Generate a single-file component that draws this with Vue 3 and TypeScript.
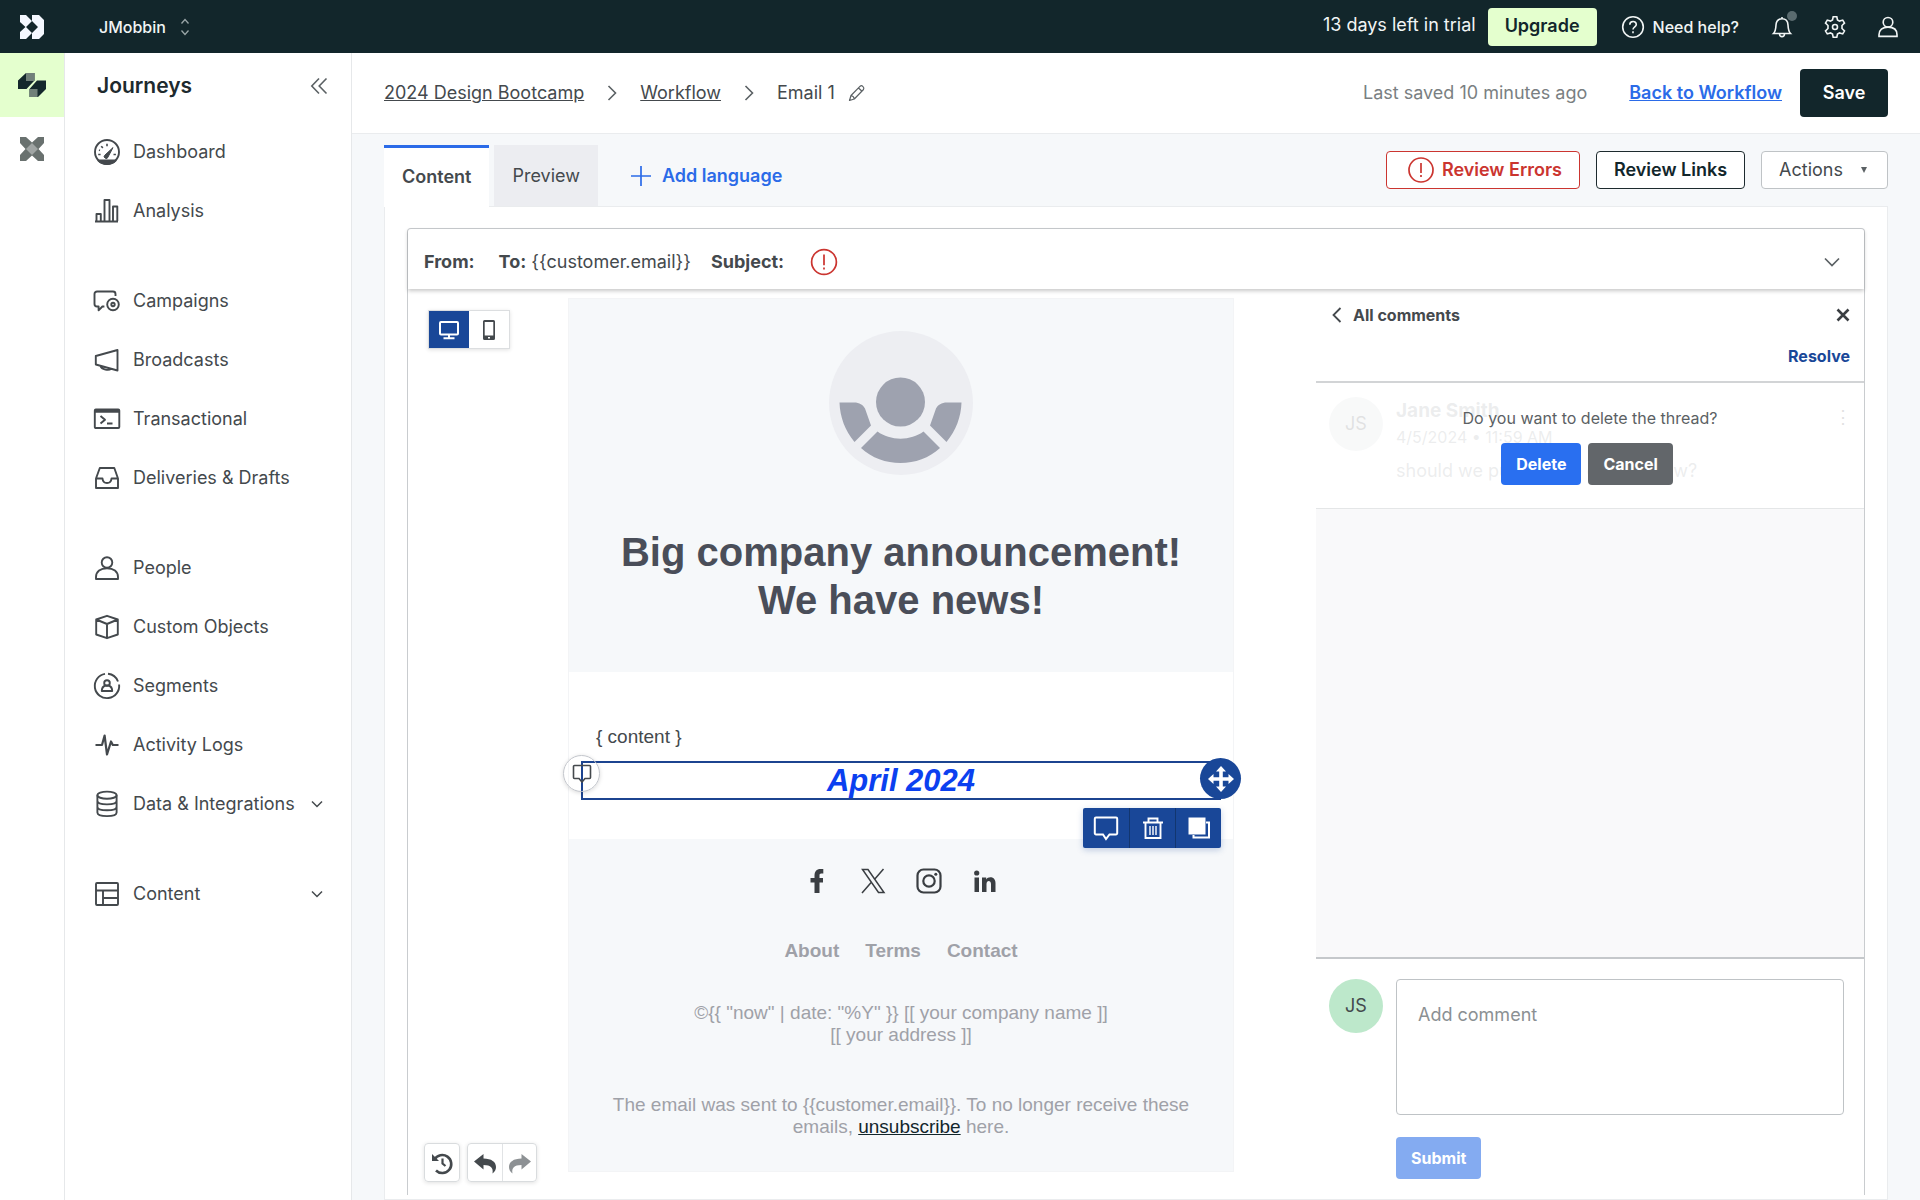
<script setup lang="ts">
import { ref } from 'vue'

interface NavItem {
  label: string
  icon: string
  expandable?: boolean
}

const navGroups: NavItem[][] = [
  [
    {
      label: 'Dashboard',
      icon: '<circle cx="14" cy="14" r="12"/><path d="M5.5 22.5h17A12 12 0 0 1 5.5 22.5z" fill="currentColor"/><path d="M11.8 17.2 20 9.6l-5 9.4a1.9 1.9 0 1 1-3.2-1.8z" fill="currentColor" stroke-width="1"/><path d="M14 5.800v2.400M8.200 8.200l1.700 1.700M5.200 16.500h2.400M20.500 16.500h2.400M6 12l1 .400" stroke-width="1.600"/>',
    },
    {
      label: 'Analysis',
      icon: '<path d="M2 24.500h23M3.500 24V17h4.300v7M11.500 24V3h5v21M20 24V9.500h4.300V24"/>',
    },
  ],
  [
    {
      label: 'Campaigns',
      icon: '<path d="M22.500 9V7A2.500 2.500 0 0 0 20 4.500H4A2.500 2.500 0 0 0 1.500 7v10A2.500 2.500 0 0 0 4 19.500h1.600v3.800l3.800-3.800h2"/><circle cx="20" cy="17.500" r="5.800"/><circle cx="20" cy="17.500" r="1.700"/>',
    },
    {
      label: 'Broadcasts',
      icon: '<path d="M2.800 10 24.500 4v20.500L2.800 18.500zM7.500 20c1 3.800 8.500 4.800 10.500 2.800"/>',
    },
    {
      label: 'Transactional',
      icon: '<rect x="1.800" y="4.500" width="24.500" height="18.500" rx="1"/><path d="M2 6h24" stroke-width="3.500"/><path d="m7.500 11 4.500 3.800-4.500 3.800M14 18.500h5.500"/>',
    },
    {
      label: 'Deliveries & Drafts',
      icon: '<path d="M3 14.500 6.800 4h14.500L25 14.500V24H3zM3 14.500h6.500c.500 6 8.500 6 9 0H25"/>',
    },
  ],
  [
    {
      label: 'People',
      icon: '<circle cx="14" cy="8.500" r="5.300"/><path d="M3 25v-2c0-5.500 4.500-8.800 11-8.800S25 17.500 25 23v2z"/>',
    },
    {
      label: 'Custom Objects',
      icon: '<path d="M14 2.800 24.800 6.500v15L14 25.200 3.200 21.500v-15zM3.200 6.500 14 11l10.800-4.500M14 11v14"/>',
    },
    {
      label: 'Segments',
      icon: '<path d="M15 1.800A12.200 12.200 0 0 1 25 9.500M26.100 12.500A12.200 12.200 0 1 1 12 1.900"/><circle cx="14" cy="11" r="2.800"/><path d="M8.800 19c0-3 1.500-4.800 3.500-5.500h3.400c2 .700 3.500 2.500 3.500 5.500z"/>',
    },
    {
      label: 'Activity Logs',
      icon: '<path d="M2.500 14H9l2.600-9.500L14 23.500l4-13 1.800 3.500h5.700" stroke-width="2.200"/>',
    },
    {
      label: 'Data & Integrations',
      icon: '<ellipse cx="14" cy="5.200" rx="9.600" ry="3.600"/><path d="M4.400 5.200v17.300c0 4.800 19.200 4.800 19.200 0V5.200M4.400 10.800c0 4.800 19.200 4.800 19.200 0M4.400 16.700c0 4.800 19.200 4.800 19.200 0"/>',
      expandable: true,
    },
  ],
  [
    {
      label: 'Content',
      icon: '<rect x="3" y="3" width="22" height="22" rx="1"/><path d="M3 10.500h22M10 10.500V25M10 18h15"/>',
      expandable: true,
    },
  ],
]

const recipient = '{{customer.email}}'
const copyright = '©{{ "now" | date: "%Y" }} [[ your company name ]]'
const address = '[[ your address ]]'
const sentTo = 'The email was sent to {{customer.email}}. To no longer receive these emails,'
const comment = ref('')
</script>

<template>
  <div class="app">
    <header class="topbar">
      <a href="#" class="brand" aria-label="Home">
        <svg width="24" height="24" viewBox="0 0 24 24"><path fill="#f4f8ff" fill-rule="evenodd" d="M0 0h6l6 6 0-6h7l5 5v14l-5 5h-7v-6l-6 6H0v-7l5.500-5L0 7zM12 6l-6 6 6 6 6-6z" /></svg>
      </a>
      <button class="workspace" type="button">
        JMobbin
        <svg width="10" height="18" viewBox="0 0 10 18" fill="none" stroke="#9aa6a8" stroke-width="1.300"><path d="m1.500 5.500 3.500-4 3.500 4M1.500 12.500l3.500 4 3.500-4" /></svg>
      </button>
      <div class="top-right">
        <span class="trial">13 days left in trial</span>
        <button class="upgrade" type="button">Upgrade</button>
        <button class="help" type="button">
          <svg width="24" height="24" viewBox="0 0 24 24" fill="none" stroke="currentColor" stroke-width="1.600"><circle cx="12" cy="12" r="10.300" /><path d="M8.800 9.800c0-4.300 6.500-4.200 6.500-.400 0 2.400-3.300 2.400-3.300 5.200M12 16.200v2" /></svg>
          Need help?
        </button>
        <button class="icon-btn bell" type="button" aria-label="Notifications">
          <svg width="24" height="24" viewBox="0 0 24 24" fill="none" stroke="currentColor" stroke-width="1.600"><path d="M3.500 18.500c2.200-2.200 2.300-5 2.500-8.500.200-4 2.500-6.200 6-6.200s5.800 2.200 6 6.200c.200 3.500.300 6.300 2.500 8.500zM12 3.800V2M9.500 19c.200 3.500 4.800 3.500 5 0" /></svg>
          <span class="bell-dot"></span>
        </button>
        <button class="icon-btn" type="button" aria-label="Settings">
          <svg width="24" height="24" viewBox="0 0 24 24" fill="none" stroke="currentColor" stroke-width="1.600"><path d="M10.200 1.800h3.600l.7 3.200 2 1.100 3.200-1 1.800 3.100-2.500 2.300v3l2.500 2.300-1.800 3.100-3.200-1-2 1.100-.700 3.200h-3.600L9.500 19l-2-1.100-3.200 1-1.800-3.100L5 13.500v-3L2.500 8.200l1.800-3.100 3.200 1 2-1.100z" /><circle cx="12" cy="12" r="2.500" /></svg>
        </button>
        <button class="icon-btn" type="button" aria-label="Account">
          <svg width="24" height="24" viewBox="0 0 28 28" fill="none" stroke="currentColor" stroke-width="1.900"><circle cx="14" cy="8.500" r="5.600" /><path d="M3.500 25v-2c0-5.500 4-8.800 10.500-8.800S24.500 17.500 24.500 23v2z" /></svg>
        </button>
      </div>
    </header>

    <div class="body">
      <nav class="rail" aria-label="Products">
        <a href="#" class="rail-item active" aria-label="Journeys">
          <svg width="28" height="26" viewBox="0 0 28 26"><path fill="#14282c" d="M0 8.500 8 1h8.500v7.500L8.500 17H0zM28 8.500V17l-8 8h-8.500v-8L19 8.500z" /><path fill="#71807a" d="M8 1h8.500v8H8zM11.500 17h8v8h-8z" /></svg>
        </a>
        <a href="#" class="rail-item" aria-label="Data Pipelines">
          <svg width="24" height="24" viewBox="0 0 24 24"><path fill="#69716f" d="M0 0h6l6 5.500L18 0h6v6l-5.500 6 5.500 6v6h-6l-6-5.500L6 24H0v-6l5.500-6L0 6z" /><path fill="#a0a5a4" d="m12 6 6 6-6 6-6-6z" /></svg>
        </a>
      </nav>

      <aside class="sidebar">
        <div class="side-head">
          <h2>Journeys</h2>
          <button type="button" aria-label="Collapse sidebar">
            <svg width="18" height="18" viewBox="0 0 18 18" fill="none" stroke="#5b6164" stroke-width="1.600"><path d="M9 1.500 1.800 9 9 16.500M16.500 1.500 9.200 9l7.300 7.500" /></svg>
          </button>
        </div>
        <ul v-for="(group, g) in navGroups" :key="g" class="nav-group">
          <li v-for="item in group" :key="item.label">
            <a href="#" class="nav-item">
              <svg width="28" height="28" viewBox="0 0 28 28" fill="none" stroke="currentColor" stroke-width="1.900" stroke-linejoin="round" v-html="item.icon" />
              <span>{{ item.label }}</span>
              <svg v-if="item.expandable" class="chev" width="12" height="8" viewBox="0 0 12 8" fill="none" stroke="currentColor" stroke-width="1.500"><path d="m1 1.500 5 5 5-5" /></svg>
            </a>
          </li>
        </ul>
      </aside>

      <main class="main">
        <div class="page-head">
          <nav class="crumbs" aria-label="Breadcrumb">
            <a href="#">2024 Design Bootcamp</a>
            <svg width="10" height="16" viewBox="0 0 10 16" fill="none" stroke="#5b6164" stroke-width="1.600"><path d="m1.500 1 7 7-7 7" /></svg>
            <a href="#">Workflow</a>
            <svg width="10" height="16" viewBox="0 0 10 16" fill="none" stroke="#5b6164" stroke-width="1.600"><path d="m1.500 1 7 7-7 7" /></svg>
            <span>Email 1</span>
            <button type="button" class="pencil" aria-label="Rename">
              <svg width="18" height="18" viewBox="0 0 18 18" fill="none" stroke="#5b6164" stroke-width="1.200" stroke-linejoin="round"><path d="M1.500 16.500 3 11.500 12.200 2.200c1.700-1.400 4.600 1.300 3.300 3.300L6.300 15zM3 11.500c1.700.300 3 1.700 3.300 3.500M10.500 4l3.500 3.300" /></svg>
            </button>
          </nav>
          <div class="head-right">
            <span class="saved">Last saved 10 minutes ago</span>
            <a href="#" class="back">Back to Workflow</a>
            <button class="save" type="button">Save</button>
          </div>
        </div>

        <div class="workspace-area">
          <div class="tab-row">
            <button class="tab active" type="button">Content</button>
            <button class="tab" type="button">Preview</button>
            <button class="add-lang" type="button">
              <svg width="22" height="22" viewBox="0 0 22 22" fill="none" stroke="currentColor" stroke-width="1.700"><path d="M11 1v20M1 11h20" /></svg>
              Add language
            </button>
            <div class="tab-actions">
              <button class="outline danger" type="button">
                <svg width="26" height="26" viewBox="0 0 26 26" fill="none" stroke="currentColor" stroke-width="1.700"><circle cx="13" cy="13" r="12" /><path d="M13 6v10M13 18v2" /></svg>
                Review Errors
              </button>
              <button class="outline dark" type="button">Review Links</button>
              <button class="outline actions" type="button" aria-haspopup="menu">
                Actions
                <svg width="6" height="6" viewBox="0 0 6 6"><path fill="#5b6164" d="M0 0h6L3 6z" /></svg>
              </button>
            </div>
          </div>

          <section class="card">
            <div class="editor">
              <div class="envelope">
                <strong class="from">From:</strong>
                <span class="to"><strong>To:</strong> {{ recipient }}</span>
                <strong class="subject">Subject:</strong>
                <svg class="warn" width="28" height="28" viewBox="0 0 26 26" fill="none" stroke="#cb3530" stroke-width="1.600"><circle cx="13" cy="13" r="11.500" /><path d="M13 6v10M13 18v2" /></svg>
                <button type="button" aria-label="Expand details">
                  <svg width="16" height="10" viewBox="0 0 16 10" fill="none" stroke="#5b6164" stroke-width="1.700"><path d="m1 1.500 7 7 7-7" /></svg>
                </button>
              </div>

              <div class="panes">
                <div class="tools">
                  <div class="device">
                    <button type="button" class="on" aria-label="Desktop">
                      <svg width="22" height="20" viewBox="0 0 22 20" fill="none" stroke="#fff" stroke-width="2"><rect x="2" y="2" width="18" height="12.500" rx="1" /><path d="M11 14v4M5.500 18.200h11" /></svg>
                    </button>
                    <button type="button" aria-label="Mobile">
                      <svg width="14" height="22" viewBox="0 0 14 22"><path fill="#44494d" fill-rule="evenodd" d="M2.500 1h9A1.500 1.500 0 0 1 13 2.500v17a1.500 1.500 0 0 1-1.500 1.500h-9A1.500 1.500 0 0 1 1 19.500v-17A1.500 1.500 0 0 1 2.500 1zM2.700 3v13.500h8.600V3zM6 18v1.500h2V18z" /></svg>
                    </button>
                  </div>
                  <div class="history">
                    <div class="btn-group">
                      <button type="button" aria-label="Version history">
                        <svg width="24" height="24" viewBox="0 0 24 24" fill="none" stroke="#44494d" stroke-width="2.600"><path d="M4.500 8.500A9 9 0 1 1 6 19.500" /><path d="M2 3v7h7z" fill="#44494d" stroke="none" /><path d="M12.500 7.500v5l3 2.500" stroke-width="2.200" /></svg>
                      </button>
                    </div>
                    <div class="btn-group">
                      <button type="button" aria-label="Undo">
                        <svg width="24" height="22" viewBox="0 0 24 22"><path fill="#44494d" d="M1 9.500 10.500 2v4.500c8 0 12.500 3.500 12.500 8.500 0 2.500-1 4.500-3.500 6.500 1-5.500-1.500-8.500-9-8.500v4.500z" /></svg>
                      </button>
                      <button type="button" aria-label="Redo">
                        <svg width="24" height="22" viewBox="0 0 24 22"><path fill="#8d9194" d="M23 9.500 13.500 2v4.500C5.500 6.500 1 10 1 15c0 2.500 1 4.500 3.500 6.500-1-5.500 1.500-8.500 9-8.500v4.500z" /></svg>
                      </button>
                    </div>
                  </div>
                </div>

                <article class="email">
                  <div class="hero">
                    <svg width="144" height="144" viewBox="0 0 144 144"><circle cx="72" cy="72" r="72" fill="#edeef2" /><g fill="#9ea2af"><circle cx="71.500" cy="71" r="24.500" /><path d="M10.500 71.500H25c5.500 0 9 2.500 11 6l6 17-16.500 16.500C16 99.500 11 86 10.500 71.500zM132.500 71.500H118c-5.500 0-9 2.500-11 6l-6 17L117.500 111c9.500-11.500 14.500-25 15-39.500zM48.500 100.500c12.500 9.500 33.500 9.500 46 0L111 117c-21.500 20-57.500 20-79 0z" /></g></svg>
                    <h1>Big company announcement!<br />We have news!</h1>
                  </div>

                  <div class="email-body">
                    <p>{ content }</p>
                    <div class="selected">
                      <button class="marker" type="button" aria-label="Open comment">
                        <svg width="20" height="20" viewBox="0 0 20 20" fill="none" stroke="#44494d" stroke-width="1.600"><path d="M2.500 1.500h15a1 1 0 0 1 1 1v11a1 1 0 0 1-1 1H13L10 18l-3-3.500H2.500a1 1 0 0 1-1-1v-11a1 1 0 0 1 1-1z" /></svg>
                      </button>
                      <h3>April 2024</h3>
                      <button class="move" type="button" aria-label="Move block">
                        <svg width="26" height="26" viewBox="0 0 26 26"><path fill="#fff" d="m13 0 5 5.500h-3.200v5.700h5.700V8L26 13l-5.500 5v-3.200h-5.700v5.700H18L13 26l-5-5.500h3.200v-5.700H5.500V18L0 13l5.500-5v3.200h5.700V5.500H8z" /></svg>
                      </button>
                      <div class="block-tools">
                        <button type="button" aria-label="Comment">
                          <svg width="26" height="26" viewBox="0 0 26 26" fill="none" stroke="#fff" stroke-width="2"><path d="M3 2.500h20a1.200 1.200 0 0 1 1.200 1.200v14.600a1.200 1.200 0 0 1-1.200 1.200h-6.500L13 24l-3-4.500H3a1.200 1.200 0 0 1-1.200-1.200V3.700A1.200 1.200 0 0 1 3 2.500z" /></svg>
                        </button>
                        <button type="button" aria-label="Delete block">
                          <svg width="22" height="24" viewBox="0 0 22 24" fill="none" stroke="#fff" stroke-width="1.900"><path d="M1 6.500h20M6.500 6V2.500h9V6M3.500 7v15h15V7" /><path d="M8 10v9M11 10v9M14 10v9" stroke-width="1.400" /></svg>
                        </button>
                        <button type="button" aria-label="Duplicate block">
                          <svg width="24" height="24" viewBox="0 0 24 24"><path d="M1.500 1.500h17v17h-17z" fill="#fff" /><path d="M19 6.500h3v15H6.500V19" fill="none" stroke="#fff" stroke-width="2" /></svg>
                        </button>
                      </div>
                    </div>
                  </div>

                  <footer class="email-foot">
                    <div class="socials">
                      <a href="#" aria-label="Facebook"><svg width="26" height="26" viewBox="0 0 26 26"><path fill="#3a3e42" d="M10.500 25V14.500H6.500V10h4V7.500c0-4 2-6.500 6-6.500h2.800v4.500h-2c-1.500 0-1.800.800-1.800 2V10h3.500v4.500H15.500V25z" /></svg></a>
                      <a href="#" aria-label="X"><svg width="26" height="26" viewBox="0 0 26 26" fill="none" stroke="#3a3e42" stroke-width="1.500"><path d="M2.500 1.500h5.500L24 24.500h-5.500zM23.500 1 14.200 11.700M2 25l9.800-11.300" /></svg></a>
                      <a href="#" aria-label="Instagram"><svg width="26" height="26" viewBox="0 0 26 26" fill="none" stroke="#3a3e42" stroke-width="2.200"><rect x="1.500" y="1.500" width="23" height="23" rx="6" /><circle cx="13" cy="13" r="5.700" /><circle cx="19.800" cy="6.300" r="1.500" fill="#3a3e42" stroke="none" /></svg></a>
                      <a href="#" aria-label="LinkedIn"><svg width="26" height="26" viewBox="0 0 26 26"><path fill="#3a3e42" d="M2.500 9.500H7V24H2.500zM10 9.500h4.200v2c1.800-3.500 9.300-3.300 9.300 3.500v9H19v-8c0-4-4.500-4-4.500 0v8H10z" /><circle cx="4.700" cy="5" r="2.600" fill="#3a3e42" /></svg></a>
                    </div>
                    <div class="foot-links">
                      <a href="#">About</a>
                      <a href="#">Terms</a>
                      <a href="#">Contact</a>
                    </div>
                    <p class="legal">{{ copyright }}<br />{{ address }}</p>
                    <p class="legal">{{ sentTo }} <a href="#">unsubscribe</a> here.</p>
                  </footer>
                </article>

                <aside class="comments">
                  <div class="comments-head">
                    <div class="comments-nav">
                      <button type="button" class="all">
                        <svg width="10" height="16" viewBox="0 0 10 16" fill="none" stroke="currentColor" stroke-width="1.800"><path d="m8.500 1-7 7 7 7" /></svg>
                        All comments
                      </button>
                      <button type="button" aria-label="Close comments">
                        <svg width="14" height="14" viewBox="0 0 14 14" fill="none" stroke="#3a3e42" stroke-width="2.600"><path d="m1.500 1.500 11 11M12.500 1.500l-11 11" /></svg>
                      </button>
                    </div>
                    <button type="button" class="resolve">Resolve</button>
                  </div>

                  <div class="thread">
                    <div class="avatar muted">JS</div>
                    <div class="thread-text">
                      <strong>Jane Smith</strong>
                      <time>4/5/2024 • 11:59 AM</time>
                      <p>should we publish the email below?</p>
                    </div>
                    <span class="dots">⋮</span>
                    <div class="confirm" role="alertdialog" aria-label="Delete thread">
                      <p>Do you want to delete the thread?</p>
                      <div class="confirm-btns">
                        <button type="button" class="delete">Delete</button>
                        <button type="button" class="cancel">Cancel</button>
                      </div>
                    </div>
                  </div>

                  <div class="thread-space"></div>

                  <form class="compose" @submit.prevent>
                    <div class="avatar">JS</div>
                    <div class="compose-main">
                      <textarea v-model="comment" placeholder="Add comment" aria-label="Add comment"></textarea>
                      <button type="submit">Submit</button>
                    </div>
                  </form>
                </aside>
              </div>
            </div>
          </section>
        </div>
      </main>
    </div>
  </div>
</template>

<style>
body {
  margin: 0;
}
</style>

<style scoped>
.app {
  min-height: 100vh;
  display: flex;
  flex-direction: column;
  font-family: Inter, 'Liberation Sans', sans-serif;
  font-size: 18px;
  line-height: 24px;
  color: #44494d;
  background: #fff;
}
.app *,
.app {
  box-sizing: border-box;
}
button {
  font: inherit;
  color: inherit;
  background: none;
  border: 0;
  padding: 0;
  display: flex;
  align-items: center;
  justify-content: center;
  white-space: nowrap;
}
svg {
  display: block;
  flex: none;
}
a {
  color: inherit;
}
h1,
h2,
h3,
p,
ul {
  margin: 0;
  padding: 0;
}

.topbar {
  height: 53px;
  flex: none;
  display: flex;
  align-items: center;
  background: #12262b;
  color: #f1f5f5;
}
.brand {
  width: 64px;
  display: flex;
  justify-content: center;
}
.workspace {
  margin-left: 35px;
  gap: 14px;
  font-size: 16px;
  font-weight: 500;
}
.top-right {
  margin-left: auto;
  display: flex;
  align-items: center;
  padding-right: 20px;
}
.trial {
  margin-right: 12px;
  padding-bottom: 3px;
}
.upgrade {
  height: 38px;
  padding: 0 17px 2px;
  border-radius: 4px;
  background: #e4ffce;
  color: #12262b;
  font-weight: 600;
}
.help {
  margin: 0 31px 0 24px;
  gap: 8px;
  font-size: 16px;
  font-weight: 500;
}
.icon-btn {
  position: relative;
  margin-left: 29px;
}
.bell {
  margin-left: 0;
}
.bell-dot {
  position: absolute;
  top: -4px;
  right: -3px;
  width: 10px;
  height: 10px;
  border-radius: 50%;
  background: #5a6b6f;
}

.body {
  flex: 1;
  display: flex;
}
.rail {
  width: 65px;
  flex: none;
  border-right: 1px solid #e6e8ea;
}
.rail-item {
  height: 64px;
  display: flex;
  align-items: center;
  justify-content: center;
}
.rail-item.active {
  background: #e4ffce;
}
.sidebar {
  width: 287px;
  flex: none;
  border-right: 1px solid #e6e8ea;
}
.side-head {
  height: 64px;
  padding: 2px 23px 0 32px;
  display: flex;
  align-items: center;
  justify-content: space-between;
  margin-bottom: 5px;
}
.side-head h2 {
  font-size: 21px;
  font-weight: 600;
  color: #1d2a2e;
}
.nav-group {
  list-style: none;
  margin-bottom: 31px;
}
.nav-item {
  height: 59px;
  padding: 0 28px;
  display: flex;
  align-items: center;
  gap: 12px;
  text-decoration: none;
  white-space: nowrap;
}
.chev {
  margin-left: auto;
}

.main {
  flex: 1;
  min-width: 0;
  display: flex;
  flex-direction: column;
  background: #f6f8fa;
}
.page-head {
  height: 81px;
  flex: none;
  padding: 0 32px;
  display: flex;
  align-items: center;
  justify-content: space-between;
  background: #fff;
  border-bottom: 1px solid #eaecee;
}
.crumbs {
  display: flex;
  align-items: center;
  gap: 23px;
}
.pencil {
  margin-left: -10px;
}
.head-right {
  display: flex;
  align-items: center;
}
.saved {
  color: #7a7f82;
}
.back {
  margin: 0 18px 0 42px;
  font-weight: 600;
  color: #2b6be8;
}
.save {
  width: 88px;
  height: 48px;
  border-radius: 4px;
  background: #12262b;
  color: #fff;
  font-weight: 600;
}

.workspace-area {
  flex: 1;
  display: flex;
  flex-direction: column;
  padding: 11px 32px 0;
}
.tab-row {
  display: flex;
  align-items: flex-end;
}
.tab {
  height: 61px;
  padding: 0 18px;
  margin-right: 5px;
  background: #ecedf1;
}
.tab.active {
  position: relative;
  height: 62px;
  padding-bottom: 2px;
  margin-bottom: -1px;
  border-top: 3px solid #2b6be8;
  background: #fff;
  font-weight: 600;
}
.add-lang {
  align-self: center;
  margin-left: 27px;
  gap: 10px;
  color: #2b6be8;
  font-weight: 600;
}
.tab-actions {
  align-self: flex-start;
  margin: 6px 0 0 auto;
  display: flex;
  gap: 16px;
}
.outline {
  height: 38px;
  padding: 0 17px;
  border: 1px solid #bfc3c6;
  border-radius: 4px;
  background: #fff;
}
.danger {
  gap: 8px;
  padding-left: 21px;
  border-color: #cb3530;
  color: #cb3530;
  font-weight: 600;
}
.dark {
  border-color: #1d2a2e;
  color: #12262b;
  font-weight: 600;
}
.actions {
  gap: 18px;
  padding-right: 20px;
}

.card {
  flex: 1;
  display: flex;
  padding: 21px 22px 4px;
  background: #fff;
  border: 1px solid #eaecee;
}
.editor {
  flex: 1;
  min-width: 0;
  display: flex;
  flex-direction: column;
  border: 1px solid #c9cccf;
  border-bottom: 0;
  border-radius: 4px 4px 0 0;
}
.envelope {
  height: 60px;
  padding: 5px 24px 0 16px;
  display: flex;
  align-items: center;
  box-shadow: 0 2px 4px rgba(0, 0, 0, 0.22);
}
.envelope strong {
  font-weight: 700;
}
.to {
  margin-left: 24px;
}
.subject {
  margin-left: 20px;
}
.warn {
  margin-left: 26px;
}
.envelope button {
  margin-left: auto;
}
.panes {
  flex: 1;
  display: flex;
}
.tools {
  width: 160px;
  flex: none;
  padding: 21px 0 13px 16px;
  display: flex;
  flex-direction: column;
  justify-content: space-between;
}
.device {
  display: flex;
  align-self: flex-start;
  margin-left: 4px;
  border: 1px solid #dcdee0;
  box-shadow: 0 1px 4px rgba(0, 0, 0, 0.12);
}
.device button {
  width: 40px;
  height: 37px;
}
.device .on {
  background: #194798;
}
.history {
  display: flex;
  gap: 7px;
}
.btn-group {
  display: flex;
  border: 1px solid #d9dcde;
  border-radius: 4px;
  box-shadow: 0 1px 4px rgba(0, 0, 0, 0.12);
}
.btn-group button {
  width: 34px;
  height: 37px;
}
.btn-group button + button {
  border-left: 1px solid #e1e3e5;
}

.email {
  flex: 1;
  min-width: 0;
  align-self: flex-start;
  margin: 9px 82px 0 0;
  border: 1px solid #f3f4f6;
  font-family: 'Liberation Sans', Arial, sans-serif;
  font-size: 19px;
  line-height: 22px;
}
.hero {
  padding: 32px 0 48px;
  display: flex;
  flex-direction: column;
  align-items: center;
  background: #f6f8fa;
}
.hero h1 {
  margin-top: 53px;
  font-size: 40px;
  line-height: 48px;
  font-weight: 700;
  text-align: center;
  color: #4a4e59;
}
.email-body {
  padding: 54px 12px 39px;
}
.email-body p {
  padding: 0 15px;
}
.selected {
  position: relative;
  margin-top: 13px;
  height: 39px;
  border: 2px solid #1c4490;
  display: flex;
  align-items: center;
  justify-content: center;
}
.selected h3 {
  font-size: 31px;
  line-height: 33px;
  font-style: italic;
  color: #0b40f0;
}
.marker {
  position: absolute;
  z-index: -1;
  left: -20px;
  top: -8px;
  width: 37px;
  height: 37px;
  border: 1px solid #c3c6cc;
  border-radius: 50%;
  box-shadow: 0 1px 4px rgba(0, 0, 0, 0.15);
}
.selected,
.email-body {
  isolation: isolate;
}
.move {
  position: absolute;
  right: -22px;
  top: -5px;
  width: 41px;
  height: 41px;
  border-radius: 50%;
  background: #194798;
}
.block-tools {
  position: absolute;
  right: -2px;
  top: 45px;
  display: flex;
  background: #194798;
  border-radius: 2px;
  box-shadow: 0 2px 6px rgba(25, 71, 152, 0.25);
}
.block-tools button {
  width: 46px;
  height: 40px;
}
.block-tools button + button {
  border-left: 1px solid #12366f;
}
.email-foot {
  padding: 29px 32px 33px;
  background: #f6f8fa;
  text-align: center;
  color: #9fa1a8;
}
.socials {
  display: flex;
  justify-content: center;
  gap: 30px;
}
.foot-links {
  margin-top: 46px;
  display: flex;
  justify-content: center;
  gap: 26px;
  font-weight: 700;
}
.foot-links a {
  text-decoration: none;
}
.legal {
  margin-top: 40px;
}
.legal + .legal {
  margin-top: 48px;
}
.legal a {
  color: #12262b;
}

.comments {
  width: 548px;
  flex: none;
  display: flex;
  flex-direction: column;
  font-size: 18px;
}
.comments-head {
  height: 94px;
  padding: 14px 14px 0 16px;
  border-bottom: 2px solid #d2d4d6;
  font-size: 16px;
  font-weight: 700;
}
.comments-nav {
  display: flex;
  justify-content: space-between;
}
.all {
  gap: 11px;
}
.resolve {
  margin: 17px 0 0 auto;
  color: #194798;
}
.thread {
  position: relative;
  height: 126px;
  padding: 14px 12px 0 13px;
  display: flex;
  gap: 13px;
  border-bottom: 1px solid #e4e6e7;
}
.avatar {
  width: 54px;
  height: 54px;
  flex: none;
  display: flex;
  align-items: center;
  justify-content: center;
  border-radius: 50%;
  background: #bde8cb;
}
.avatar.muted {
  background: #d4d8da;
}
.thread-text {
  display: flex;
  flex-direction: column;
  padding-top: 2px;
  color: #8b9093;
}
.thread-text strong {
  font-size: 19px;
  font-weight: 700;
}
.thread-text time {
  margin-top: 2px;
  font-size: 16px;
}
.thread-text p {
  margin-top: 10px;
}
.dots {
  margin-left: auto;
  margin-top: 8px;
}
.confirm {
  position: absolute;
  inset: 0;
  padding-top: 23px;
  display: flex;
  flex-direction: column;
  align-items: center;
  background: rgba(255, 255, 255, 0.84);
  font-size: 16px;
  color: #5b6164;
}
.confirm-btns {
  margin-top: 13px;
  margin-right: 6px;
  display: flex;
  gap: 7px;
}
.confirm button,
.compose button {
  height: 42px;
  padding: 0 15px;
  border-radius: 4px;
  font-size: 16px;
  font-weight: 700;
  color: #fff;
}
.delete {
  background: #296ff0;
}
.cancel {
  background: #62666a;
}
.thread-space {
  flex: 1;
  background: #f9f9fa;
}
.compose {
  padding: 20px 20px 16px 13px;
  display: flex;
  gap: 13px;
  border-top: 2px solid #c5c8cb;
}
.compose-main {
  flex: 1;
}
textarea {
  display: block;
  width: 100%;
  height: 136px;
  padding: 23px 21px;
  border: 1px solid #bfc3c6;
  border-radius: 4px;
  font: inherit;
  resize: none;
}
textarea::placeholder {
  color: #8b9093;
}
.compose button {
  margin-top: 22px;
  background: #84abf1;
}
</style>
